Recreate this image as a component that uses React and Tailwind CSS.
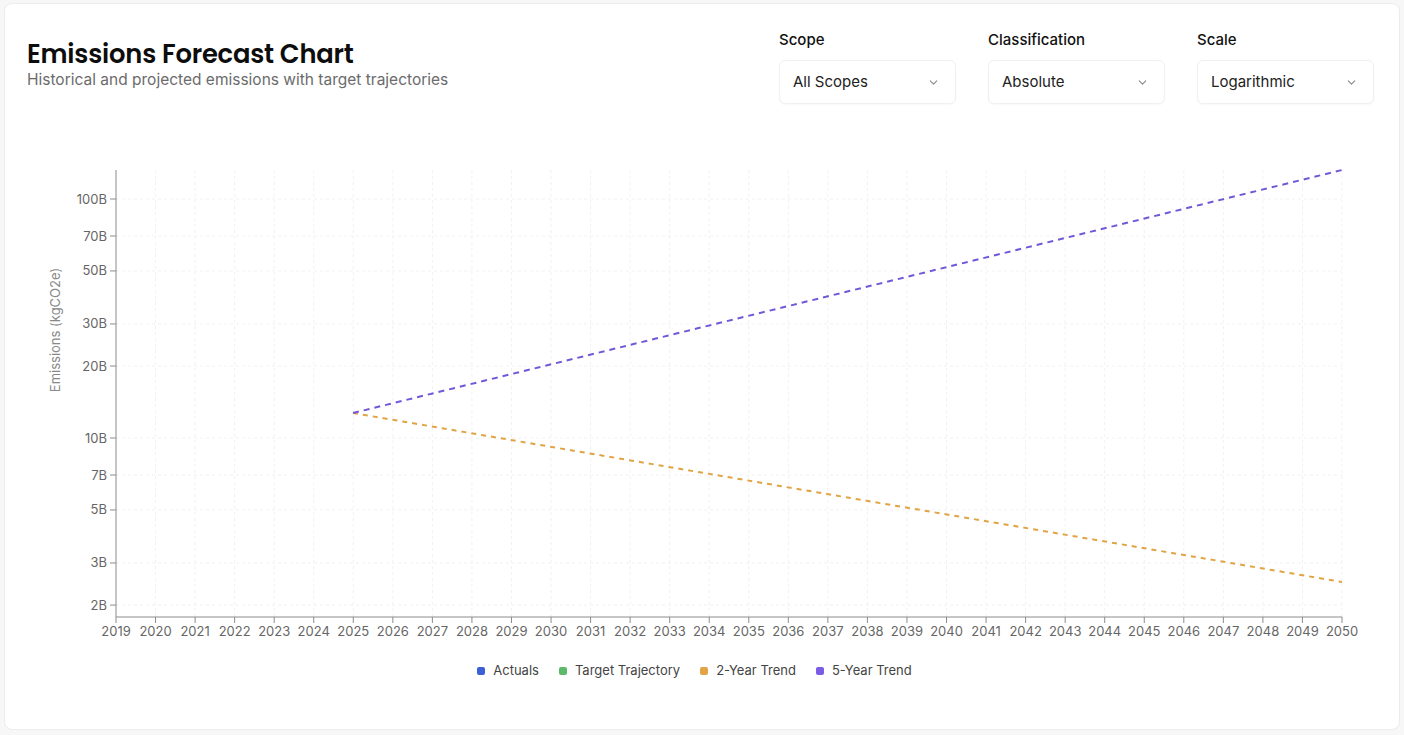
import React from "react";

const years = Array.from({ length: 32 }, (_, i) => 2019 + i);
const x0 = 115;
const x1 = 1341;
const xOf = (i) => x0 + ((x1 - x0) * i) / 31;
const yOf = (v) => 438 - 239 * (Math.log10(v) - 1);
const yTicks = [
  [100, "100B"],
  [70, "70B"],
  [50, "50B"],
  [30, "30B"],
  [20, "20B"],
  [10, "10B"],
  [7, "7B"],
  [5, "5B"],
  [3, "3B"],
  [2, "2B"],
];

function Chevron() {
  return (
    <svg width="13" height="13" viewBox="0 0 24 24" fill="none" stroke="#8a8a8a" strokeWidth="2" strokeLinecap="round" strokeLinejoin="round">
      <path d="m6 9 6 6 6-6" />
    </svg>
  );
}

function Select({ label, value }) {
  return (
    <div className="flex w-[177px] flex-col">
      <div className="h-5 text-[15px] font-medium leading-5 text-[#111]">{label}</div>
      <div className="mt-[10px] flex h-[44px] items-center justify-between rounded-md border border-[#f0f0f0] bg-white pl-[13px] pr-[15px] shadow-[0_1px_2px_rgba(0,0,0,0.03)]">
        <span className="pt-[1px] text-[15px] text-[#222]">{value}</span>
        <Chevron />
      </div>
    </div>
  );
}

function Chart() {
  return (
    <svg className="block" width="1396" height="532" viewBox="4 118 1396 532" style={{ fontFamily: "Inter, 'Liberation Sans', sans-serif" }}>
      {yTicks.map(([v]) => (
        <line key={"h" + v} x1={x0} x2={x1} y1={yOf(v)} y2={yOf(v)} stroke="#f1f1f1" strokeDasharray="3 3" />
      ))}
      {years.slice(1).map((y, i) => (
        <line key={"v" + y} x1={xOf(i + 1)} x2={xOf(i + 1)} y1={170} y2={617} stroke="#f1f1f1" strokeDasharray="3 3" />
      ))}
      <line x1={x0} x2={x0} y1={170} y2={617} stroke="#8c8c8c" />
      <line x1={x0} x2={x1} y1={617} y2={617} stroke="#8c8c8c" />
      {yTicks.map(([v, l]) => (
        <g key={"t" + v}>
          <line x1={x0 - 6} x2={x0} y1={yOf(v)} y2={yOf(v)} stroke="#8c8c8c" />
          <text x={x0 - 9} y={yOf(v) + 4.5} textAnchor="end" fontSize="13" fill="#666">
            {l}
          </text>
        </g>
      ))}
      {years.map((y, i) => (
        <g key={"x" + y}>
          <line x1={xOf(i)} x2={xOf(i)} y1={617} y2={623} stroke="#8c8c8c" />
          <text x={xOf(i)} y={636} textAnchor="middle" fontSize="13" fill="#666">
            {y}
          </text>
        </g>
      ))}
      <text x={59} y={330} transform="rotate(-90 59 330)" textAnchor="middle" fontSize="13" fill="#888">
        Emissions (kgCO2e)
      </text>
      <line x1={352} y1={413} x2={1341} y2={582} stroke="#e0a444" strokeWidth="2" strokeDasharray="5 5" />
      <line x1={352} y1={413} x2={1341} y2={170} stroke="#7258d9" strokeWidth="2" strokeDasharray="6 5" />
    </svg>
  );
}

function LegendItem({ color, label }) {
  return (
    <div className="flex items-center gap-[8px]">
      <span className={`h-2 w-2 rounded-[2px] ${color}`} />
      <span className="text-[13px] text-[#444]">{label}</span>
    </div>
  );
}

export default function App() {
  return (
    <div className="min-h-[735px] w-[1404px] bg-[#f7f7f7] pl-[4px] pt-[3px]" style={{ fontFamily: "Inter, 'Liberation Sans', sans-serif" }}>
      <div className="h-[727px] w-[1396px] rounded-lg border border-[#ececec] bg-white">
        <div className="flex justify-between pl-[22px] pr-[25px] pt-[26px]">
          <div className="pt-[9px]">
            <h1 className="text-[25.8px] font-semibold leading-[31px] tracking-[-0.2px] text-[#0d0d0d]" style={{ fontFamily: "Poppins, 'Open Sans', sans-serif" }}>
              Emissions Forecast Chart
            </h1>
            <p className="text-[15.5px] leading-5 text-[#6b6b6b]">Historical and projected emissions with target trajectories</p>
          </div>
          <div className="flex gap-[32px]">
            <Select label="Scope" value="All Scopes" />
            <Select label="Classification" value="Absolute" />
            <Select label="Scale" value="Logarithmic" />
          </div>
        </div>
        <div className="mt-[14px]">
          <Chart />
        </div>
        <div className="mt-[11px] flex h-5 items-center justify-center gap-5 pr-[15px]">
          <LegendItem color="bg-[#3d5fd6]" label="Actuals" />
          <LegendItem color="bg-[#5cba6a]" label="Target Trajectory" />
          <LegendItem color="bg-[#e2a446]" label="2-Year Trend" />
          <LegendItem color="bg-[#7b5ce6]" label="5-Year Trend" />
        </div>
      </div>
    </div>
  );
}
